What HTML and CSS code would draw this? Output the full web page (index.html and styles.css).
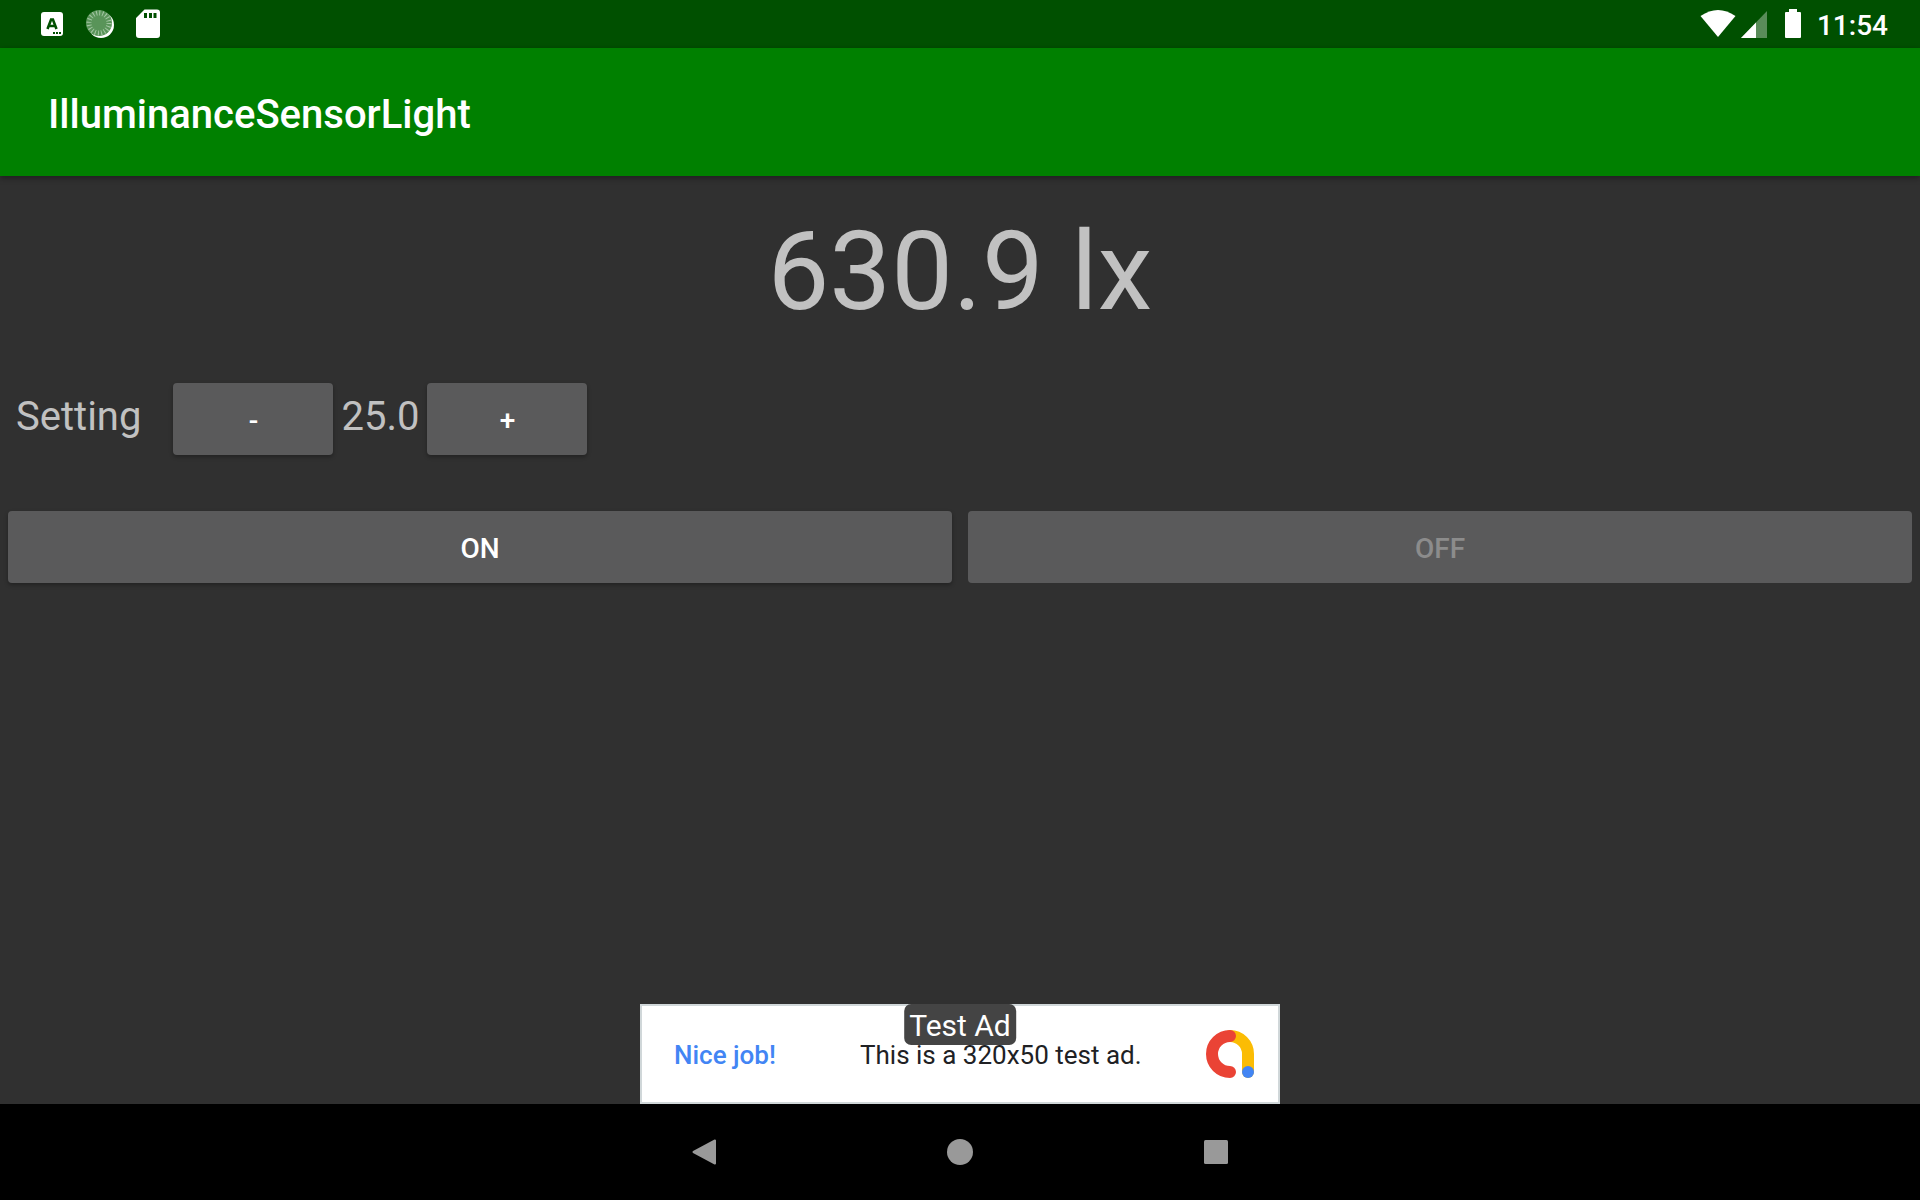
FILE: index.html
```html
<!DOCTYPE html>
<html lang="en">
<head>
  <meta charset="UTF-8" />
  <meta name="viewport" content="width=device-width, initial-scale=1.0" />
  <title>IlluminanceSensorLight</title>
  <link rel="stylesheet" href="styles.css">
</head>
<body>
<!-- ========= Status bar ========= -->
<div class="status-bar">
  <div class="status-left">
    <svg width="32" height="32" viewBox="0 0 32 32">
      <rect x="5" y="4" width="22" height="24" rx="3" fill="#fff"/>
      <path d="M11.5 21 L15.1 11.5 H16.9 L20.5 21 M13 18 H19" fill="none" stroke="#005000" stroke-width="2.6"/>
      <path d="M17 24h2v2h-2z M20 24h2v2h-2z M23 24h2v2h-2z" fill="#005000"/>
    </svg>
    <svg width="32" height="32" viewBox="0 0 32 32">
      <circle cx="17" cy="17" r="13" fill="#fff"/>
      <circle cx="15" cy="15" r="13" fill="#599459"/>
      <circle cx="15" cy="15" r="10" fill="none" stroke="#a5c7a5" stroke-width="5" stroke-dasharray="1 2.14"/>
    </svg>
    <svg width="32" height="32" viewBox="0 0 32 32">
      <path d="M12.5 1.5 H25 a3 3 0 0 1 3 3 V27 a3 3 0 0 1-3 3 H7 a3 3 0 0 1-3-3 V10z" fill="#fff"/>
      <path d="M12 5h3v5h-3z M17 5h3v5h-3z M21.5 5h3v5h-3z" fill="#005000"/>
    </svg>
  </div>
  <div class="status-right">
    <svg width="36" height="32" viewBox="0 0 36 32">
      <path d="M.5 8 Q18-4 35.500 8 L18 29z" fill="#fff"/>
    </svg>
    <svg class="signal" width="26" height="32" viewBox="0 0 26 32">
      <path d="M26 3 V30 H0z" fill="#598c59"/>
      <path d="M15 14.500 V30 H0z" fill="#fff"/>
    </svg>
    <svg class="battery" width="16" height="32" viewBox="0 0 16 32">
      <path d="M4 1 h8 v3 h3 a1 1 0 0 1 1 1 V29 a1 1 0 0 1-1 1 H1 a1 1 0 0 1-1-1 V5 a1 1 0 0 1 1-1 h3z" fill="#fff"/>
    </svg>
    <span class="clock">11:54</span>
  </div>
</div>

<!-- ========= App bar ========= -->
<header class="app-bar">
  <h1>IlluminanceSensorLight</h1>
</header>

<!-- ========= Content ========= -->
<main>
  <div class="lux">630.9 lx</div>

  <div class="setting-row">
    <label for="threshold">Setting</label>
    <button class="btn step" id="minusBtn">-</button>
    <output id="threshold">25.0</output>
    <button class="btn step" id="plusBtn">+</button>
  </div>

  <div class="switch-row">
    <button class="btn">ON</button>
    <button class="btn" disabled>OFF</button>
  </div>

  <!-- Ad banner -->
  <div class="ad">
    <span class="ad-badge">Test Ad</span>
    <span class="ad-title">Nice job!</span>
    <span class="ad-text">This is a 320x50 test ad.</span>
    <svg class="ad-logo" width="48" height="48" viewBox="0 0 48 48" fill="none" stroke-width="12" stroke-linecap="round">
      <path d="M24 6 A18 18 0 0 1 42 24 V42" stroke="#fbbc04"/>
      <path d="M24 6 A18 18 0 0 0 24 42" stroke="#ea4335"/>
      <circle cx="42" cy="42" r="6" fill="#4285f4"/>
    </svg>
  </div>
</main>

<!-- ========= Navigation bar ========= -->
<nav class="nav-bar">
  <button aria-label="Back">
    <svg width="32" height="32" viewBox="0 0 32 32"><path d="M27 4.500 V27.500 L5.500 16z" fill="#999" stroke="#999" stroke-width="2" stroke-linejoin="round"/></svg>
  </button>
  <button aria-label="Home">
    <svg width="32" height="32" viewBox="0 0 32 32"><circle cx="16" cy="16" r="13" fill="#999"/></svg>
  </button>
  <button aria-label="Recents">
    <svg width="32" height="32" viewBox="0 0 32 32"><rect x="4" y="4" width="24" height="24" rx="1.500" fill="#999"/></svg>
  </button>
</nav>
</body>
</html>
```
FILE: styles.css
```css
:root {
  --green: #008000;
  --green-dark: #005000;
  --bg: #303030;
  --btn: #5a5a5b;
  --text: #c1c1c1;
}

*, *::before, *::after { box-sizing: border-box; }
body {
  margin: 0;
  min-height: 100vh;
  display: flex;
  flex-direction: column;
  font-family: Roboto, "Liberation Sans", sans-serif;
  background: var(--bg);
  color: var(--text);
}
svg { display: block; overflow: visible; }

/* ===== Status bar ===== */
.status-bar {
  display: flex;
  justify-content: space-between;
  align-items: center;
  height: 48px;
  padding: 0 32px 0 36px;
  background: var(--green-dark);
}
.status-left { display: flex; gap: 16px; }
.status-right { display: flex; align-items: center; color: #fff; }
.signal { margin-left: 5px; }
.battery { margin: 0 16px 0 18px; }
.clock { font-size: 28px; line-height: 32px; font-weight: 500; padding-top: 3px; }

/* ===== App bar ===== */
.app-bar {
  display: flex;
  align-items: center;
  height: 128px;
  padding: 6px 48px 0;
  background: var(--green);
  box-shadow: 0 2px 6px rgba(0,0,0,.4);
}
h1 { margin: 0; font-size: 40px; line-height: 48px; font-weight: 500; color: #fff; }

/* ===== Content ===== */
main {
  flex: 1;
  display: flex;
  flex-direction: column;
}
.lux {
  padding-top: 30px;
  font-size: 110px;
  line-height: 132px;
  text-align: center;
}
.btn {
  height: 72px;
  padding: 2px 0 0;
  border: none;
  border-radius: 4px;
  background: var(--btn);
  color: #fff;
  font-family: inherit;
  font-size: 28px;
  font-weight: 500;
  box-shadow: 0 2px 4px rgba(0,0,0,.3);
}
.btn:disabled { color: #8c8c8c; box-shadow: none; }

.setting-row {
  display: flex;
  align-items: center;
  gap: 8px;
  padding: 45px 16px 0;
  font-size: 40px;
  line-height: 48px;
}
.setting-row label { margin-right: 24px; }
.setting-row label, .setting-row output { padding-bottom: 4px; }
.step { width: 160px; }

.switch-row {
  display: flex;
  gap: 16px;
  padding: 56px 8px 0;
}
.switch-row .btn { flex: 1; }

/* ===== Ad banner ===== */
.ad {
  position: relative;
  display: flex;
  align-items: center;
  width: 640px;
  height: 100px;
  margin: auto auto 0;
  padding: 0 24px 0 32px;
  border: 2px solid #d0d7d9;
  background: #fff;
  color: #202124;
  font-size: 26px;
  line-height: 32px;
}
.ad-title { width: 186px; color: #4285f4; font-weight: 500; }
.ad-text { flex: 1; }
.ad-title, .ad-text { padding-top: 2px; }
.ad-badge {
  position: absolute;
  top: -2px;
  left: 50%;
  transform: translateX(-50%);
  padding: 4px 5px 1px;
  border-radius: 7px;
  background: #444;
  color: #fff;
  font-size: 30px;
  line-height: 36px;
  white-space: nowrap;
}

/* ===== Navigation bar ===== */
.nav-bar {
  display: flex;
  justify-content: center;
  align-items: center;
  gap: 224px;
  height: 96px;
  background: #000;
}
.nav-bar button { padding: 0; border: none; background: none; }
```
